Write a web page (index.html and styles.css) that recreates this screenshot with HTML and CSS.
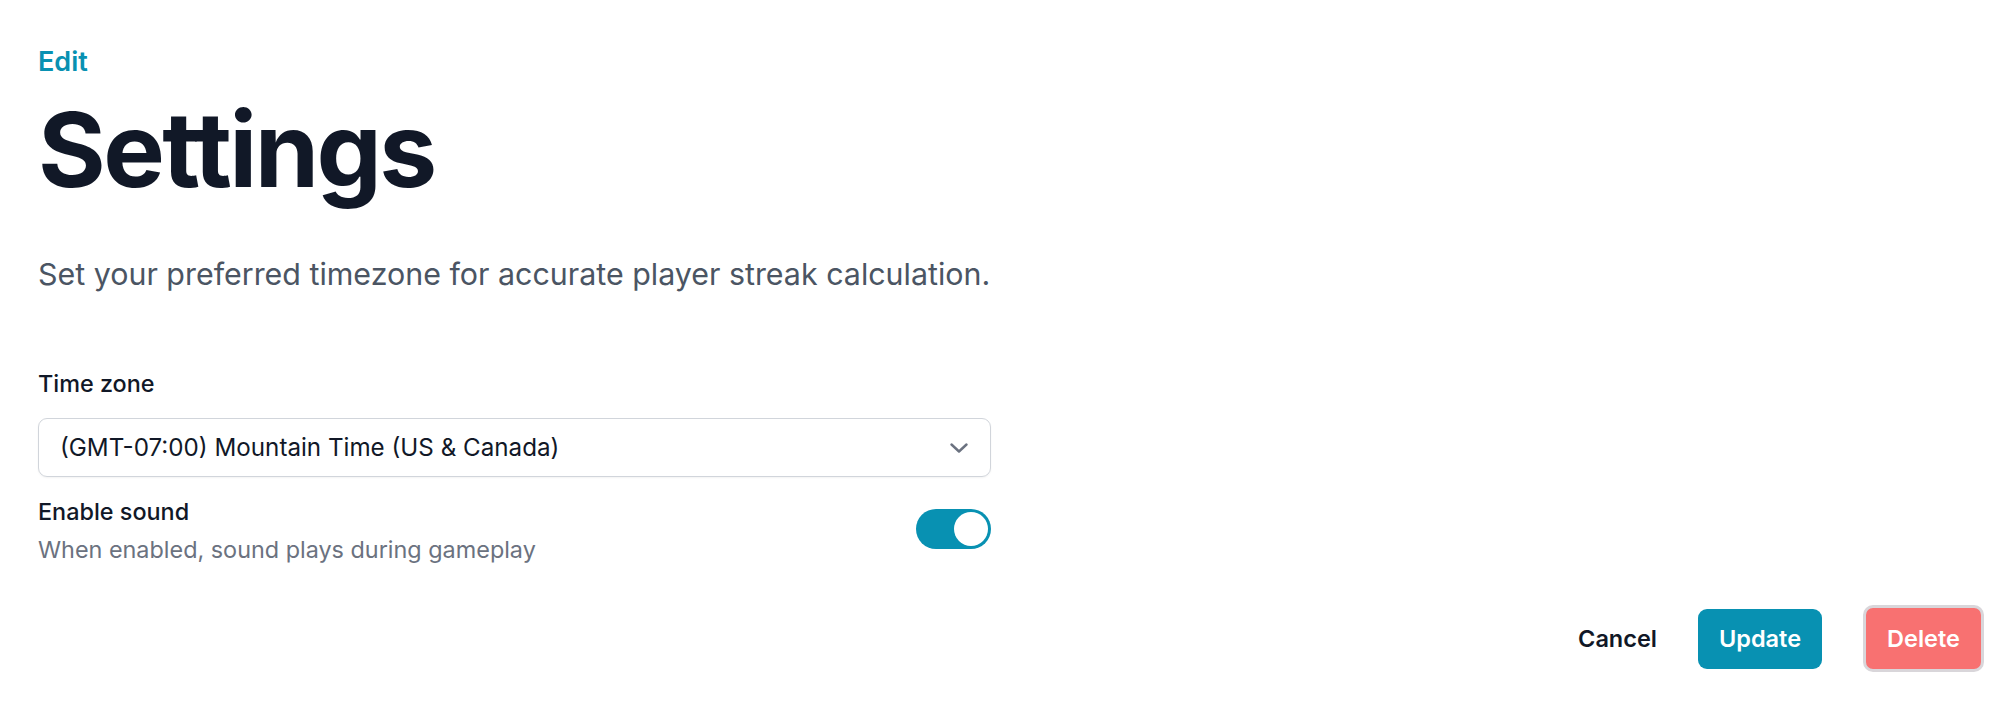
FILE: index.html
```html
<!DOCTYPE html>
<html lang="en">
<head>
<meta charset="utf-8">
<title>Settings</title>
<link rel="stylesheet" href="styles.css">
</head>
<body>
<main class="page">
  <section class="form">
    <p class="eyebrow">Edit</p>
    <h1 class="title">Settings</h1>
    <p class="lead">Set your preferred timezone for accurate player streak calculation.</p>

    <label class="field-label" for="tz">Time zone</label>
    <div class="select">
      <span class="select-value">(GMT-07:00) Mountain Time (US &amp; Canada)</span>
      <svg class="chevron" width="18" height="10" viewBox="0 0 18 10" aria-hidden="true">
        <path d="M1.5 1.5 L9 8.5 L16.5 1.5" fill="none" stroke="#6b7280" stroke-width="2.4" stroke-linecap="round" stroke-linejoin="round"/>
      </svg>
    </div>

    <div class="toggle-row">
      <div class="toggle-text">
        <div class="toggle-label">Enable sound</div>
        <div class="toggle-help">When enabled, sound plays during gameplay</div>
      </div>
      <div class="switch"><span class="knob"></span></div>
    </div>
  </section>

  <footer class="actions">
    <button class="btn btn-plain">Cancel</button>
    <button class="btn btn-primary">Update</button>
    <button class="btn btn-danger">Delete</button>
  </footer>
</main>
</body>
</html>
```

FILE: styles.css
```css
* { box-sizing: border-box; }

html, body {
  margin: 0;
  background: #ffffff;
}

body {
  font-family: Inter, "Noto Sans", "Liberation Sans", sans-serif;
  color: #111827;
}

.page {
  padding: 44px 16px 0 38px;
  display: flex;
  flex-direction: column;
}

.form {
  width: 953px;
  display: flex;
  flex-direction: column;
}

.eyebrow {
  margin: 0;
  font-size: 27px;
  line-height: 36px;
  font-weight: 600;
  color: #0891b2;
}

.title {
  margin: 18px 0 0 0;
  font-size: 103.5px;
  line-height: 103px;
  font-weight: 700;
  letter-spacing: -0.025em;
  color: #111827;
}

.lead {
  margin: 53px 0 0 0;
  font-size: 30.4px;
  line-height: 40px;
  font-weight: 400;
  color: #4b5563;
}

.field-label {
  margin-top: 75px;
  font-size: 23.4px;
  line-height: 30px;
  font-weight: 500;
  color: #111827;
}

.select {
  margin-top: 19px;
  height: 59px;
  border: 1.5px solid #d1d5db;
  border-radius: 9px;
  box-shadow: 0 1px 2px rgba(0, 0, 0, 0.05);
  display: flex;
  align-items: center;
  justify-content: space-between;
  padding: 0 22px 0 21px;
}

.select-value {
  font-size: 24.2px;
  color: #111827;
}

.chevron {
  display: block;
}

.toggle-row {
  margin-top: 21px;
  display: flex;
  justify-content: space-between;
  align-items: flex-start;
}

.toggle-label {
  font-size: 23.4px;
  line-height: 27px;
  font-weight: 500;
  color: #111827;
}

.toggle-help {
  margin-top: 11px;
  font-size: 23.4px;
  line-height: 27px;
  color: #6b7280;
}

.switch {
  margin-top: 11px;
  width: 75px;
  height: 40px;
  border-radius: 20px;
  background: #0891b2;
  display: flex;
  align-items: center;
  justify-content: flex-end;
  padding: 0 3px;
}

.knob {
  width: 34px;
  height: 34px;
  border-radius: 50%;
  background: #ffffff;
}

.actions {
  margin-top: 42px;
  display: flex;
  justify-content: flex-end;
  align-items: center;
  gap: 41px;
}

.btn {
  font-family: inherit;
  font-size: 23.5px;
  font-weight: 600;
  border: none;
  cursor: pointer;
  display: flex;
  align-items: center;
  justify-content: center;
}

.btn-plain {
  background: transparent;
  color: #111827;
  padding: 0;
}

.btn-primary {
  width: 124px;
  height: 60px;
  border-radius: 9px;
  background: #0891b2;
  color: #ffffff;
}

.btn-danger {
  width: 121px;
  height: 67px;
  border-radius: 10px;
  background: #f87171;
  color: #ffffff;
  border: 3px solid #d9d6da;
}
```
